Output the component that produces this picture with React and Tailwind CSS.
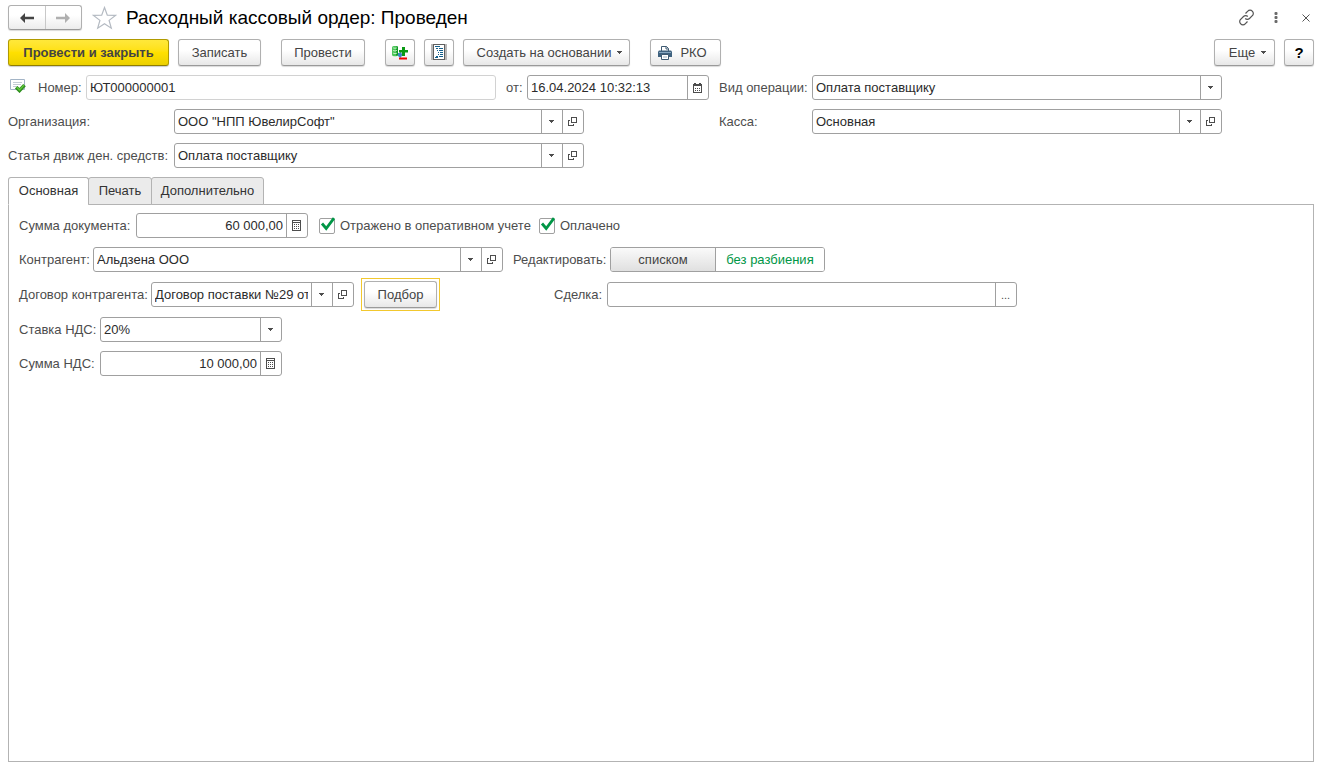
import { useId, useState } from 'react'
import clsx from 'clsx'

const BTN =
  'flex h-[27px] shrink-0 items-center justify-center whitespace-nowrap rounded-[3px] border border-[#b0b0b0] border-b-[#9a9a9a] bg-linear-to-b from-white from-40% to-[#e8e8e8] text-[#444444] shadow-[0_1px_1px_rgba(0,0,0,0.15)]'

const Caret = () => (
  <svg width="5" height="3" viewBox="0 0 5 3" shapeRendering="crispEdges">
    <path d="M0 0h5v1H0zM1 1h3v1H1zM2 2h1v1H2z" fill="#4d4d4d" />
  </svg>
)

const OpenIcon = () => (
  <svg width="9" height="9" viewBox="0 0 9 9" fill="none" stroke="#4d4d4d" shapeRendering="crispEdges">
    <path d="M3.5 .5h5v5h-5zM2 3.5H.5v5h5V7" />
  </svg>
)

const CalendarIcon = () => (
  <svg width="9" height="10" viewBox="0 0 9 10" shapeRendering="crispEdges">
    <path d="M0 1h9v2H0zM1 0h2v1H1zM6 0h2v1H6zM0 3h1v7H0zM8 3h1v7H8zM1 9h7v1H1z" fill="#4d4d4d" />
    <path d="M2 5h1v1H2zM4 5h1v1H4zM6 5h1v1H6zM2 7h1v1H2zM4 7h1v1H4zM6 7h1v1H6z" fill="#4d4d4d" />
  </svg>
)

const CalcIcon = () => (
  <svg width="9" height="11" viewBox="0 0 9 11" shapeRendering="crispEdges">
    <path d="M0 0h9v1H0zM0 2h9v1H0zM0 0h1v11H0zM8 0h1v11H8zM0 10h9v1H0z" fill="#4d4d4d" />
    <path d="M2 4h1v1H2zM4 4h1v1H4zM6 4h1v1H6zM2 6h1v1H2zM4 6h1v1H4zM6 6h1v1H6zM2 8h1v1H2zM4 8h1v1H4zM6 8h1v1H6z" fill="#4d4d4d" />
  </svg>
)

const PostedIcon = () => (
  <svg width="16" height="14" viewBox="0 0 16 14" fill="none">
    <path d="M.5 .5h14v10H.5z" fill="#fff" stroke="#a3b4c6" />
    <path d="M3 3.5h9M3 5.5h8M3 7.5h5" stroke="#c4ccd4" />
    <path d="M6.2 8.2l3.3 3.3 5-5.4" stroke="#2f8f1f" strokeWidth="3.6" />
    <path d="M6.8 8.3l2.7 2.6 4.4-4.8" stroke="#62c83c" strokeWidth="1.4" />
  </svg>
)

const MovementsIcon = () => (
  <svg width="16" height="16" viewBox="0 0 16 16">
    <path d="M0 2.500C0 .6 6 .6 6 2.500v7.500c0 1.800-6 1.800-6 0z" fill="#4cc45a" />
    <path d="M4 1.500h2v9H4z" fill="#0f9a24" />
    <path d="M1 2.500c0 1 4 1 4 0M1 5.300c1 .8 3 .8 4 0M1 8c1 .8 3 .8 4 0" stroke="#c2f0c2" fill="none" />
    <path d="M6 8h2V6l2 3h1l-2.500 4L6 11z" fill="#3d85c6" />
    <path d="M10 2h3v3h3v2.500h-3V11h-3V7.500H7V5h3z" fill="#0a9a14" />
    <path d="M7 12.500h8v2H7z" fill="#f00000" />
  </svg>
)

const ReportIcon = () => (
  <svg width="16" height="17" viewBox="0 0 16 17" shapeRendering="crispEdges">
    <path d="M0 0h2v16H0zM14 0h2v16h-2z" fill="#b8b8b8" />
    <path d="M2.500 .5h11v15h-11z" fill="#fff" stroke="#5f5f5f" />
    <path
      d="M4 2h5v1H4zM5 4h2v1H5zM8 4h4v1H8zM6 6h1v1H6zM8 6h4v1H8zM7 8h1v1H7zM9 8h3v1H9zM7 10h1v1H7zM9 10h3v1H9zM5 12h2v1H5zM8 12h4v1H8zM4 13h3v1H4z"
      fill="#14608c"
    />
  </svg>
)

const PrinterIcon = () => (
  <svg width="14" height="14" viewBox="0 0 14 14">
    <path d="M3.500 5V.5h5l2 2V5" fill="#fff" stroke="#3e5a72" />
    <path d="M8 .5V3h2.500" fill="none" stroke="#3e5a72" />
    <path d="M0 5.500L1 4.500h12l1 1V11H0z" fill="#3f627f" />
    <path d="M1 6.500h12" stroke="#86a6c0" />
    <path d="M3.500 8.500h7v5h-7z" fill="#fff" stroke="#3e5a72" />
    <path d="M5 11h4" stroke="#9db3c4" />
  </svg>
)

function Label({ className, ...props }) {
  return <label className={clsx('shrink-0 whitespace-nowrap', className)} {...props} />
}

function FieldButton({ label, children }) {
  return (
    <button
      aria-label={label}
      className="flex w-[21px] shrink-0 items-center justify-center border-l border-[#a0a0a0] pr-px"
    >
      {children}
    </button>
  )
}

function Field({ label, labelClass, className, value, readOnly, align, children }) {
  const id = useId()
  return (
    <div className="flex min-w-0 items-center">
      <Label htmlFor={id} className={labelClass}>{label}</Label>
      <div
        className={clsx(
          'flex h-[25px] min-w-0 overflow-hidden rounded-[3px] border bg-white',
          readOnly ? 'border-[#d2d2d2]' : 'border-[#a0a0a0]',
          className,
        )}
      >
        <input
          id={id}
          defaultValue={value}
          readOnly={readOnly}
          className={clsx(
            'w-full min-w-0 flex-1 px-[3px] text-[#2b2b2b] outline-none',
            align === 'right' && 'text-right',
          )}
        />
        {children}
      </div>
    </div>
  )
}

function SelectField({ label, labelClass, className, options }) {
  const id = useId()
  return (
    <div className="flex min-w-0 items-center">
      <Label htmlFor={id} className={labelClass}>{label}</Label>
      <div className={clsx('relative h-[25px] min-w-0 rounded-[3px] border border-[#a0a0a0] bg-white', className)}>
        <select id={id} className="h-full w-full appearance-none pr-6 pl-[3px] text-[#2b2b2b] outline-none">
          {options.map((o) => (
            <option key={o}>{o}</option>
          ))}
        </select>
        <span className="pointer-events-none absolute inset-y-0 right-0 flex w-[21px] items-center justify-center border-l border-[#a0a0a0] pr-px">
          <Caret />
        </span>
      </div>
    </div>
  )
}

// Reference field: drop-down list plus "open the item"
function RefField(props) {
  return (
    <Field {...props}>
      <FieldButton label="Выбрать"><Caret /></FieldButton>
      <FieldButton label="Открыть"><OpenIcon /></FieldButton>
    </Field>
  )
}

function Check({ className, children }) {
  return (
    <label className={clsx('flex shrink-0 items-center gap-[5px] whitespace-nowrap', className)}>
      <span className="relative flex shrink-0">
        <input
          type="checkbox"
          defaultChecked
          className="peer size-4 appearance-none rounded-[2px] border border-[#a0a0a0] bg-white"
        />
        <svg
          className="pointer-events-none absolute -top-px left-px hidden peer-checked:block"
          width="16"
          height="16"
          viewBox="0 0 16 16"
          fill="none"
        >
          <path d="M2 6.500L6.200 11.500 14 1.200" stroke="#009646" strokeWidth="2.800" />
        </svg>
      </span>
      {children}
    </label>
  )
}

function TitleBar() {
  return (
    <header className="flex h-[25px] items-center">
      <div className="flex h-[25px] w-[74px] shrink-0 rounded-[3px] border border-[#b0b0b0] border-b-[#9a9a9a] bg-linear-to-b from-white from-40% to-[#ececec] shadow-[0_1px_1px_rgba(0,0,0,0.15)]">
        <button aria-label="Назад" className="flex flex-1 items-center justify-center border-r border-[#c8c8c8]">
          <svg width="14" height="10" viewBox="0 0 14 10">
            <path d="M0 5l5-5v3.700h9v2.600H5V10z" fill="#444" />
          </svg>
        </button>
        <button aria-label="Вперед" className="flex flex-1 items-center justify-center">
          <svg width="14" height="10" viewBox="0 0 14 10">
            <path d="M14 5L9 0v3.700H0v2.600h9V10z" fill="#b0b0b0" />
          </svg>
        </button>
      </div>
      <button aria-label="В избранное" className="ml-[10px] shrink-0">
        <svg width="25" height="24" viewBox="0 0 25 24" fill="none" stroke="#b4bac2" strokeWidth="1.200">
          <path d="M12.500 1.500l2.800 7.600 8.200.3-6.400 5 2.200 7.800-6.800-4.500-6.800 4.500 2.200-7.800-6.400-5 8.200-.3z" />
        </svg>
      </button>
      <h1 className="ml-[9px] truncate text-[19px] leading-6 text-black">Расходный кассовый ордер: Проведен</h1>
      <div className="ml-auto flex shrink-0 items-center">
        <button aria-label="Получить ссылку">
          <svg width="17" height="17" viewBox="0 0 17 17" fill="none" stroke="#555" strokeWidth="1.200">
            <path d="M7.500 4.500L9.800 2.200a3 3 0 0 1 4.500 0 3 3 0 0 1 0 4.500L11.500 9.500a3 3 0 0 1-4.300 0" />
            <path d="M9.500 12.500L7.200 14.800a3 3 0 0 1-4.500 0 3 3 0 0 1 0-4.500L5.500 7.500a3 3 0 0 1 4.300 0" />
          </svg>
        </button>
        <button aria-label="Меню" className="ml-[19px]">
          <svg width="4" height="13" viewBox="0 0 4 13" fill="#6a6a6a">
            <rect x=".5" y="1" width="3" height="3" rx="1" />
            <rect x=".5" y="5" width="3" height="3" rx="1" />
            <rect x=".5" y="9" width="3" height="3" rx="1" />
          </svg>
        </button>
        <button aria-label="Закрыть" className="mr-1 ml-6">
          <svg width="8" height="8" viewBox="0 0 8 8" stroke="#555">
            <path d="M.5 .5l7 7M7.500 .5l-7 7" />
          </svg>
        </button>
      </div>
    </header>
  )
}

function Toolbar() {
  return (
    <div className="mt-[9px] flex items-center">
      <button className="flex h-[27px] w-[161px] shrink-0 items-center justify-center rounded-[3px] border border-[#b09a00] border-b-[#8f7d00] bg-linear-to-b from-[#ffe83a] via-[#ffe000] to-[#ecd000] font-bold whitespace-nowrap text-[#444444] shadow-[0_1px_1px_rgba(0,0,0,0.2)]">
        Провести и закрыть
      </button>
      <button className={clsx(BTN, 'ml-[9px] w-[83px]')}>Записать</button>
      <button className={clsx(BTN, 'ml-5 w-[84px]')}>Провести</button>
      <button aria-label="Движения документа" className={clsx(BTN, 'ml-5 w-[30px]')}><MovementsIcon /></button>
      <button aria-label="Отчет" className={clsx(BTN, 'ml-[9px] w-[30px]')}><ReportIcon /></button>
      <button className={clsx(BTN, 'ml-[9px] w-[167px] gap-[6px] pl-[6px]')}>
        Создать на основании <Caret />
      </button>
      <button className={clsx(BTN, 'ml-5 w-[71px] gap-2 pr-[6px]')}><PrinterIcon /> РКО</button>
      <button className={clsx(BTN, 'ml-auto w-[61px] gap-[6px] pl-[6px]')}>Еще <Caret /></button>
      <button aria-label="Справка" className={clsx(BTN, 'ml-[9px] w-[30px]')}>
        <span className="text-[15px] font-bold text-black">?</span>
      </button>
    </div>
  )
}

function MainTab() {
  const [mode, setMode] = useState('single')
  const seg = (key) =>
    mode === key ? 'bg-white text-[#009646]' : 'bg-linear-to-b from-[#fafafa] to-[#e0e0e0] text-[#444444]'

  return (
    <div className="flex flex-col gap-[9px]">
      <div className="flex items-center gap-[11px]">
        <Field label="Сумма документа:" labelClass="w-[117px]" className="w-[172px]" value="60 000,00" align="right">
          <FieldButton label="Калькулятор"><CalcIcon /></FieldButton>
        </Field>
        <Check className="w-[209px]">Отражено в оперативном учете</Check>
        <Check>Оплачено</Check>
      </div>

      <div className="flex items-center gap-[10px]">
        <RefField label="Контрагент:" labelClass="w-[74px]" className="w-[410px]" value="Альдзена ООО" />
        <div className="flex items-center" role="group" aria-labelledby="edit-mode">
          <span id="edit-mode" className="w-[97px] shrink-0">Редактировать:</span>
          <div className="flex h-[25px] w-[215px] shrink-0 overflow-hidden rounded-[3px] border border-[#a0a0a0]">
            <button
              aria-pressed={mode === 'list'}
              onClick={() => setMode('list')}
              className={clsx('flex-1 border-r border-[#a0a0a0]', seg('list'))}
            >
              списком
            </button>
            <button
              aria-pressed={mode === 'single'}
              onClick={() => setMode('single')}
              className={clsx('w-[108px]', seg('single'))}
            >
              без разбиения
            </button>
          </div>
        </div>
      </div>

      <div className="flex h-[27px] items-center">
        <RefField
          label="Договор контрагента:"
          labelClass="w-[132px]"
          className="w-[203px]"
          value="Договор поставки №29 от 16.04.2024"
        />
        <div className="ml-[7px] shrink-0 border border-[#f2c82e] p-[2px]">
          <button className={clsx(BTN, 'w-[73px]')}>Подбор</button>
        </div>
        <div className="ml-[114px] min-w-0">
          <Field label="Сделка:" labelClass="w-[53px]" className="w-[410px]" value="">
            <FieldButton label="Выбрать сделку">
              <span className="text-[11px]">...</span>
            </FieldButton>
          </Field>
        </div>
      </div>

      <SelectField
        label="Ставка НДС:"
        labelClass="w-[81px]"
        className="w-[182px]"
        options={['20%', '10%', '0%', 'Без НДС']}
      />
      <Field label="Сумма НДС:" labelClass="w-[81px]" className="w-[182px]" value="10 000,00" align="right">
        <FieldButton label="Калькулятор"><CalcIcon /></FieldButton>
      </Field>
    </div>
  )
}

const TABS = [
  { name: 'Основная', width: 'w-[81px]' },
  { name: 'Печать', width: 'w-[64px]' },
  { name: 'Дополнительно', width: 'w-[113px]' },
]

export default function App() {
  const [tab, setTab] = useState('Основная')

  return (
    <div className="flex min-h-screen flex-col bg-white pt-[5px] pr-[6px] pb-[5px] pl-2 font-['Liberation_Sans',Arial,sans-serif] text-[13px] leading-4 text-[#4d4d4d]">
      <TitleBar />
      <Toolbar />

      <div className="mt-[9px] grid grid-cols-[701px_minmax(0,1fr)] gap-x-[10px] gap-y-[9px]">
        <div className="flex items-center">
          <span className="w-[30px] shrink-0 self-start pt-1 pl-[2px]"><PostedIcon /></span>
          <Field label="Номер:" labelClass="w-[48px]" className="w-[410px]" value="ЮТ000000001" readOnly />
          <div className="ml-[10px]">
            <Field label="от:" labelClass="w-[21px]" className="w-[182px]" value="16.04.2024 10:32:13">
              <FieldButton label="Календарь"><CalendarIcon /></FieldButton>
            </Field>
          </div>
        </div>
        <SelectField
          label="Вид операции:"
          labelClass="w-[93px]"
          className="w-[410px]"
          options={['Оплата поставщику', 'Возврат покупателю']}
        />
        <RefField label="Организация:" labelClass="w-[166px]" className="w-[410px]" value={'ООО "НПП ЮвелирСофт"'} />
        <RefField label="Касса:" labelClass="w-[93px]" className="w-[410px]" value="Основная" />
        <RefField label="Статья движ ден. средств:" labelClass="w-[166px]" className="w-[410px]" value="Оплата поставщику" />
      </div>

      <div role="tablist" className="relative z-10 mt-[9px] -mb-px flex">
        {TABS.map(({ name, width }, i) => (
          <button
            key={name}
            role="tab"
            aria-selected={tab === name}
            onClick={() => setTab(name)}
            className={clsx(
              'h-7 rounded-t-[3px] border border-[#b3b3b3] text-[#333333]',
              width,
              i > 0 && '-ml-px',
              tab === name ? 'border-b-white bg-white' : 'bg-[#ebebeb]',
            )}
          >
            {name}
          </button>
        ))}
      </div>
      <main role="tabpanel" className="flex-1 border border-[#b3b3b3] px-[10px] py-2">
        {tab === 'Основная' && <MainTab />}
      </main>
    </div>
  )
}
